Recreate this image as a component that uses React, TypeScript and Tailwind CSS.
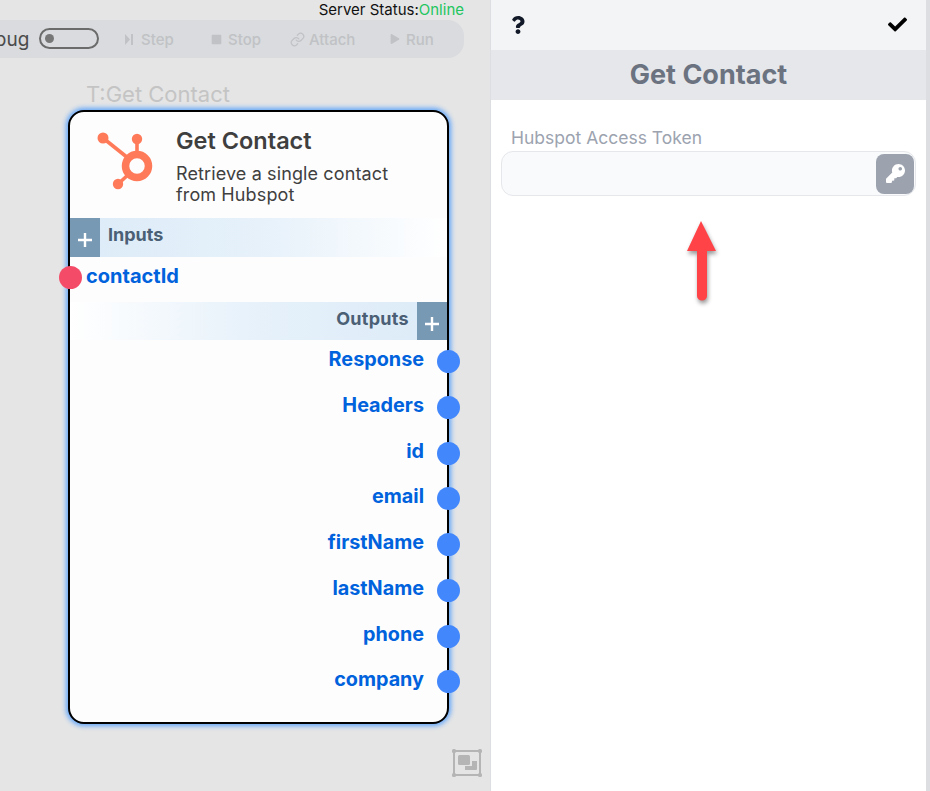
import React from 'react';
import { FaCheck, FaQuestion, FaKey, FaStop, FaPlay } from 'react-icons/fa';
import { Link } from 'lucide-react';

const font = { fontFamily: 'Inter, sans-serif' };

const OUTPUTS = [
  { name: 'Response', top: 238 },
  { name: 'Headers', top: 284 },
  { name: 'id', top: 330 },
  { name: 'email', top: 375 },
  { name: 'firstName', top: 421 },
  { name: 'lastName', top: 467 },
  { name: 'phone', top: 513 },
  { name: 'company', top: 558 },
];

const HubspotLogo = () => (
  <svg width="58" height="60" viewBox="0 0 58 60" fill="none" className="shrink-0">
    <g stroke="#ff7a59" strokeLinecap="round">
      <line x1="7" y1="8" x2="32" y2="28" strokeWidth="3.6" />
      <line x1="41" y1="9" x2="41" y2="26" strokeWidth="3.6" />
      <line x1="22" y1="54" x2="33" y2="44" strokeWidth="3.6" />
      <circle cx="41" cy="36" r="11.500" strokeWidth="7.500" />
    </g>
    <circle cx="7" cy="8" r="5.500" fill="#ff7a59" />
    <circle cx="41" cy="9" r="5.200" fill="#ff7a59" />
    <circle cx="22" cy="54" r="5.200" fill="#ff7a59" />
  </svg>
);

const ToolbarItem = ({ icon, label, className }: { icon: React.ReactNode; label: string; className: string }) => (
  <div className={`flex items-center text-[#c0c2c5] ${className}`}>
    {icon}
    <span className="text-[15px] font-medium leading-none">{label}</span>
  </div>
);

const PlusBox = () => (
  <div className="w-[30px] h-full bg-[#7899b4] flex items-center justify-center shrink-0 pt-[5px]">
    <svg width="16" height="16" viewBox="0 0 16 16"><path d="M8 1v14M1 8h14" stroke="#fff" strokeWidth="2.4" /></svg>
  </div>
);

const Node = () => (
  <div className="absolute left-[68px] top-[110px] w-[381px] h-[614px] bg-[#fdfdfd] border-2 border-black rounded-[16px] shadow-[0_0_5px_2px_#60a5fa]">
    <div className="h-[106px] flex pl-[26px] pt-[18px]">
      <HubspotLogo />
      <div className="ml-[22px] -mt-[3px]">
        <div className="text-[23.500px] font-semibold leading-[28px] text-[#3f3f3f]">Get Contact</div>
        <div className="mt-[8px] text-[18px] leading-[21px] tracking-[0.12px] text-[#404040]">Retrieve a single contact<br />from Hubspot</div>
      </div>
    </div>
    <div className="h-[39px] flex bg-gradient-to-r from-[#dcebf8] via-[#e6f1fa] to-white">
      <PlusBox />
      <span className="ml-[8px] mt-[6px] text-[18px] font-bold leading-[22px] text-[#4b5f75]">Inputs</span>
    </div>
    <div className="h-[45px] pl-[16px] pt-[5px] text-[20px] font-bold leading-[28px] text-[#0062dc]">contactId</div>
    <div className="h-[38px] flex justify-end bg-gradient-to-l from-[#dcebf8] via-[#e6f1fa] to-white">
      <span className="mr-[8px] mt-[6px] text-[18px] tracking-[0.3px] font-bold leading-[22px] text-[#4b5f75]">Outputs</span>
      <PlusBox />
    </div>
    <div className="absolute left-[-11px] top-[154px] w-[23px] h-[23px] rounded-full bg-[#f44b69]" />
    {OUTPUTS.map((o) => (
      <div key={o.name} className="absolute right-[-13px] flex items-center gap-[13px]" style={{ top: o.top }}>
        <span className="-mt-[5px] text-[19.800px] font-bold leading-[24px] text-[#0062dc]">{o.name}</span>
        <div className="w-[23px] h-[23px] rounded-full bg-[#4287fb]" />
      </div>
    ))}
  </div>
);

export default function App() {
  return (
    <div className="relative w-[930px] h-[791px] flex overflow-hidden bg-white" style={font}>
      {/* canvas */}
      <div className="relative w-[490px] h-full bg-[#e5e5e5] shrink-0 overflow-hidden">
        <div className="pt-[1px] pr-[26px] text-right text-[15px] leading-[17px] text-[#111]">
          Server Status:<span className="text-[#22c55e]">Online</span>
        </div>
        <div className="mt-[2px] ml-[-30px] w-[494px] h-[38px] bg-[#d9dbde] rounded-2xl flex items-center relative">
          <span className="absolute left-[0px] text-[19px] text-[#4b4b4b] leading-none">Debug</span>
          <div className="absolute left-[69px] top-[8px] w-[60px] h-[21px] border-2 border-[#6b6b6b] rounded-full flex items-center pl-[4px]">
            <div className="w-[9px] h-[9px] rounded-full bg-[#777]" />
          </div>
          <ToolbarItem
            className="absolute left-[155px] gap-[8px]"
            label="Step"
            icon={<svg width="8" height="11" viewBox="0 0 8 11" fill="currentColor"><path d="M0 0l5 5.500L0 11zM6 0h2v11H6z" /></svg>}
          />
          <ToolbarItem className="absolute left-[241px] gap-[6px]" label="Stop" icon={<FaStop size={11} />} />
          <ToolbarItem className="absolute left-[320px] gap-[4px]" label="Attach" icon={<Link size={15} />} />
          <ToolbarItem className="absolute left-[420px] gap-[6px]" label="Run" icon={<FaPlay size={10} />} />
        </div>
        <div className="absolute left-[86px] top-[81px] text-[22px] leading-[27px] text-[#c4c4c4]">T:Get Contact</div>
        <Node />
        <svg className="absolute left-[452px] top-[749px]" width="30" height="28" viewBox="0 0 30 28" fill="none">
          <rect x="2" y="2" width="26" height="24" stroke="#b5b5b5" strokeWidth="2" />
          <rect x="0" y="0" width="4" height="4" rx="1.500" fill="#b5b5b5" />
          <rect x="26" y="0" width="4" height="4" rx="1.500" fill="#b5b5b5" />
          <rect x="0" y="24" width="4" height="4" rx="1.500" fill="#b5b5b5" />
          <rect x="26" y="24" width="4" height="4" rx="1.500" fill="#b5b5b5" />
          <rect x="6" y="6" width="12" height="10" rx="1.500" fill="#b5b5b5" />
          <path d="M20 12h5v8a1 1 0 0 1-1 1H13v-4h7z" fill="#b5b5b5" />
        </svg>
      </div>

      {/* side panel */}
      <div className="w-[436px] h-full border-l border-[#dcdee2] bg-white shrink-0">
        <div className="h-[50px] bg-[#f3f4f6] flex items-center justify-between pl-[18px] pr-[19px] text-[#111827]">
          <FaQuestion size={18} />
          <FaCheck size={19} className="-mt-[2px] text-black" />
        </div>
        <div className="h-[50px] bg-[#e5e7eb] flex items-center justify-center text-[27px] font-bold text-[#6b7280]">Get Contact</div>
        <div className="pt-[27px] px-[10px]">
          <div className="pl-[10px] pb-[2px] text-[17.500px] leading-[22px] text-[#9ca3af]">Hubspot Access Token</div>
          <div className="h-[45px] bg-[#f9fafb] border border-[#e5e7eb] rounded-xl flex items-center justify-end pr-[1px]">
            <div className="w-[38px] h-[40px] bg-[#9ca3af] rounded-lg flex items-center justify-center text-white">
              <FaKey size={19} />
            </div>
          </div>
        </div>
      </div>
      <div className="flex-1 bg-[#dcdee2]" />

      {/* annotation arrow */}
      <svg className="absolute left-[680px] top-[216px] drop-shadow-[1px_3px_2px_rgba(0,0,0,0.4)]" width="44" height="92" viewBox="0 0 44 92" fill="none">
        <path d="M21 5L36 35H27V80a5 4.500 0 0 1-10 0V35H7z" fill="#ff4347" />
      </svg>
    </div>
  );
}
